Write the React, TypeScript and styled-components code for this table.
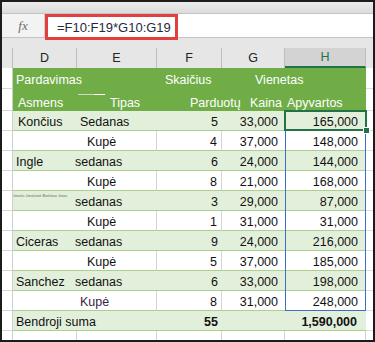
import React from 'react'
import styled, { createGlobalStyle } from 'styled-components'

type DataRow = {
  name?: string
  nameIndent?: number
  scribble?: boolean
  type: string
  typeIndent: number
  typeColor?: string
  qty: string
  price: string
  total: string
  band: boolean
}

const rows: DataRow[] = [
  { name: 'Končius', nameIndent: 5, type: 'Sedanas', typeIndent: 3, qty: '5', price: '33,000', total: '165,000', band: true },
  { type: 'Kupė', typeIndent: 10, qty: '4', price: '37,000', total: '148,000', band: false },
  { name: 'Ingle', nameIndent: 3, type: 'sedanas', typeIndent: -2, qty: '6', price: '24,000', total: '144,000', band: true },
  { type: 'Kupė', typeIndent: 10, qty: '8', price: '21,000', total: '168,000', band: false },
  { scribble: true, type: 'sedanas', typeIndent: -2, qty: '3', price: '29,000', total: '87,000', band: true },
  { type: 'Kupė', typeIndent: 10, qty: '1', price: '31,000', total: '31,000', band: false },
  { name: 'Ciceras', nameIndent: 3, type: 'sedanas', typeIndent: -2, qty: '9', price: '24,000', total: '216,000', band: true },
  { type: 'Kupė', typeIndent: 10, qty: '5', price: '37,000', total: '185,000', band: false },
  { name: 'Sanchez', nameIndent: 3, type: 'sedanas', typeIndent: -2, qty: '6', price: '33,000', total: '198,000', band: true },
  { type: 'Kupė', typeIndent: 3, typeColor: '#3a1d45', qty: '8', price: '31,000', total: '248,000', band: false },
]

const columns = ['D', 'E', 'F', 'G', 'H']

const App: React.FC = () => {
  return (
    <>
      <GlobalStyle />
      <Frame>
        <TopStrip />
        <FormulaRow>
          <FxBox>fx</FxBox>
          <FormulaInput />
          <Highlight>=F10:F19*G10:G19</Highlight>
        </FormulaRow>
        <Gap />
        <GridRow>
          <HeadCell />
          {columns.map((c) => (
            <HeadCell key={c} active={c === 'H'}>
              {c}
            </HeadCell>
          ))}
          <HeadCell last />
        </GridRow>

        <GridRow>
          <RowHead />
          <TitleCell h={21} pb={1} indent={3}>
            <Label>Pardavimas</Label>
          </TitleCell>
          <TitleCell h={21} />
          <TitleCell h={21} pb={1} indent={8}>
            <Label>Skaičius</Label>
          </TitleCell>
          <TitleCell h={21} pb={1} indent={33}>
            <Label>Vienetas</Label>
          </TitleCell>
          <TitleCell h={21} />
          <Tail />
        </GridRow>
        <GridRow>
          <RowHead />
          <TitleCell h={22} indent={5}>
            <Label>Asmens</Label>
          </TitleCell>
          <TitleCell h={22} indent={33}>
            <Dash />
            <Label>Tipas</Label>
          </TitleCell>
          <TitleCell h={22} indent={33}>
            <Label>Parduotų</Label>
          </TitleCell>
          <TitleCell h={22} indent={28}>
            <Label>Kaina</Label>
          </TitleCell>
          <TitleCell h={22} indent={2}>
            <Label>Apyvartos</Label>
          </TitleCell>
          <Tail />
        </GridRow>

        <Body>
          {rows.map((r, i) => (
            <GridRow key={`row-${i}`}>
              <RowHead />
              <Cell band={r.band} indent={r.nameIndent ?? 3}>
                {r.scribble ? (
                  <Scribble>Jonaitis Jonaitienė Markūnas Jonas</Scribble>
                ) : (
                  <Label>{r.name}</Label>
                )}
              </Cell>
              <Cell band={r.band} indent={r.typeIndent} grid={!r.band} color={r.typeColor}>
                <Label>{r.type}</Label>
              </Cell>
              <Cell band={r.band} right={4} grid={!r.band}>
                <Label>{r.qty}</Label>
              </Cell>
              <Cell band={r.band} right={7}>
                <Label>{r.price}</Label>
              </Cell>
              <Cell band={r.band} right={8}>
                <Label>{r.total}</Label>
              </Cell>
              <Tail />
            </GridRow>
          ))}
          <Selection />
          <ActiveCell>
            <Handle />
          </ActiveCell>
        </Body>

        <GridRow>
          <RowHead />
          <Cell band indent={3}>
            <Label>Bendroji suma</Label>
          </Cell>
          <Cell band />
          <Cell band right={4} bold>
            <Label>55</Label>
          </Cell>
          <Cell band />
          <Cell band right={9} bold>
            <Label>1,590,000</Label>
          </Cell>
          <Tail />
        </GridRow>
        <GridRow>
          <RowHead />
          <EmptyCell />
          <EmptyCell />
          <EmptyCell />
          <EmptyCell />
          <EmptyCell />
          <Tail />
        </GridRow>
      </Frame>
    </>
  )
}

const GlobalStyle = createGlobalStyle`
  html, body {
    margin: 0;
    padding: 0;
    background: #fff;
  }
  body {
    font-family: 'Liberation Sans', Arial, sans-serif;
  }
`

const Frame = styled.div`
  position: relative;
  box-sizing: border-box;
  width: 375px;
  height: 342px;
  border: 2px solid #1c1c1c;
  overflow: hidden;
  background: #fff;
  font-size: 12.5px;
  color: #111;
`

const TopStrip = styled.div`
  height: 11px;
  background: linear-gradient(#ececec, #dcdcdc);
  border-bottom: 1px solid #c4c4c4;
`

const FormulaRow = styled.div`
  display: flex;
  height: 23px;
  border-bottom: 1px solid #c4c4c4;
`

const FxBox = styled.div`
  width: 42px;
  display: flex;
  align-items: center;
  justify-content: center;
  background: #f3f3f3;
  font-family: 'Liberation Serif', serif;
  font-style: italic;
  font-size: 13px;
  color: #6b6b6b;
`

const FormulaInput = styled.div`
  flex: 1;
  background: #fff;
  border-left: 1px solid #d0d0d0;
`

const Highlight = styled.div`
  position: absolute;
  left: 43px;
  top: 12px;
  box-sizing: border-box;
  width: 133px;
  height: 26px;
  border: 3px solid #e2403f;
  background: #fff;
  display: flex;
  align-items: center;
  padding-left: 9px;
  font-size: 13px;
  color: #1f2a3c;
`

const Gap = styled.div`
  height: 10px;
  background: #e6e6e6;
`

const GridRow = styled.div`
  display: grid;
  grid-template-columns: 11px 64px 80px 65px 63px 81px 7px;
`

const HeadCell = styled.div<{ active?: boolean; last?: boolean }>`
  box-sizing: border-box;
  height: 20px;
  display: flex;
  align-items: center;
  justify-content: center;
  background: ${(p) => (p.active ? '#d3d3d3' : '#e6e6e6')};
  border-right: ${(p) => (p.last ? 'none' : '1px solid #bdbdbd')};
  border-bottom: ${(p) => (p.active ? '2px solid #217346' : 'none')};
  color: ${(p) => (p.active ? '#217346' : '#222')};
  font-size: 12.5px;
`

const RowHead = styled.div`
  background: #fff;
  border-right: 1px solid #cfcfcf;
  border-bottom: 1px solid #d6d6d6;
`

const Tail = styled.div`
  background: #fff;
  border-bottom: 1px solid #dcdcdc;
`

const Label = styled.span`
  position: relative;
  z-index: 2;
  white-space: nowrap;
`

const TitleCell = styled.div<{ h: number; indent?: number; pb?: number }>`
  box-sizing: border-box;
  height: ${(p) => p.h}px;
  display: flex;
  align-items: flex-end;
  position: relative;
  padding-bottom: ${(p) => p.pb ?? 0}px;
  background: #70ad47;
  color: #fff;
  line-height: 15px;
  text-indent: ${(p) => p.indent ?? 0}px;
`

const Dash = styled.span`
  position: absolute;
  left: 1px;
  top: 5px;
  width: 27px;
  height: 1px;
  background: linear-gradient(90deg, #cfd8c8 60%, #fff 60%);
`

const Body = styled.div`
  position: relative;
`

const Cell = styled.div<{
  band?: boolean
  indent?: number
  right?: number
  grid?: boolean
  bold?: boolean
  color?: string
}>`
  box-sizing: border-box;
  height: 20px;
  display: flex;
  align-items: flex-end;
  justify-content: ${(p) => (p.right !== undefined ? 'flex-end' : 'flex-start')};
  padding-right: ${(p) => p.right ?? 0}px;
  text-indent: ${(p) => p.indent ?? 0}px;
  background: ${(p) => (p.band ? '#e2efda' : '#fff')};
  border-bottom: 1px solid #a9d08e;
  border-right: ${(p) => (p.grid ? '1px solid #d4d4d4' : 'none')};
  color: ${(p) => p.color ?? '#111'};
  font-weight: ${(p) => (p.bold ? 700 : 400)};
  line-height: 16px;
`

const Scribble = styled.span`
  position: relative;
  z-index: 2;
  align-self: flex-start;
  margin-top: 4px;
  font-size: 3px;
  line-height: 3px;
  text-indent: 0;
  white-space: nowrap;
  color: #555;
  letter-spacing: 0.2px;
`

const EmptyCell = styled.div`
  height: 20px;
  border-right: 1px solid #d4d4d4;
  background: #fff;
`

const Selection = styled.div`
  position: absolute;
  z-index: 3;
  left: 283px;
  top: 0;
  width: 81px;
  height: 200px;
  box-sizing: border-box;
  border: 1px solid #3b6fc2;
  pointer-events: none;
`

const ActiveCell = styled.div`
  position: absolute;
  z-index: 3;
  left: 282px;
  top: -1px;
  width: 83px;
  height: 21px;
  box-sizing: border-box;
  border: 2px solid #217346;
`

const Handle = styled.div`
  position: absolute;
  right: -5px;
  bottom: -5px;
  width: 5px;
  height: 5px;
  background: #217346;
  border: 1px solid #fff;
`

export default App
